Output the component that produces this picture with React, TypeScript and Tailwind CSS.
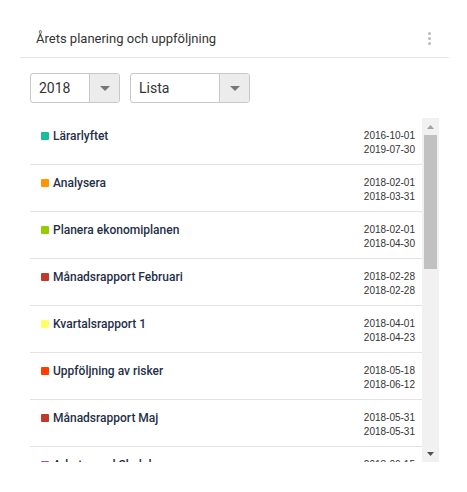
import { useState } from "react";

type Activity = {
	id: number;
	title: string;
	color: string;
	start: string;
	end: string;
};

const activities: Activity[] = [
	{ id: 1, title: "Lärarlyftet", color: "#1abc9c", start: "2016-10-01", end: "2019-07-30" },
	{ id: 2, title: "Analysera", color: "#ff9500", start: "2018-02-01", end: "2018-03-31" },
	{ id: 3, title: "Planera ekonomiplanen", color: "#99cc00", start: "2018-02-01", end: "2018-04-30" },
	{ id: 4, title: "Månadsrapport Februari", color: "#c0392b", start: "2018-02-28", end: "2018-02-28" },
	{ id: 5, title: "Kvartalsrapport 1", color: "#ffff66", start: "2018-04-01", end: "2018-04-23" },
	{ id: 6, title: "Uppföljning av risker", color: "#ff3d00", start: "2018-05-18", end: "2018-06-12" },
	{ id: 7, title: "Månadsrapport Maj", color: "#c0392b", start: "2018-05-31", end: "2018-05-31" },
	{ id: 8, title: "Arbete med Skolplan", color: "#c2458a", start: "2018-06-15", end: "2018-08-31" },
];

function Select({ value, width }: { value: string; width: string }) {
	return (
		<div
			className={`flex h-[30px] ${width} rounded-[3px] border border-[#c8c8c8] bg-white overflow-hidden`}
		>
			<div className="flex-1 flex items-center pl-[8px] text-[14px] text-[#333]">
				{value}
			</div>
			<div className="w-[30px] flex items-center justify-center bg-[#ececec] border-l border-[#c8c8c8]">
				<svg width="10" height="5" viewBox="0 0 10 5">
					<path d="M0 0 L10 0 L5 5 Z" fill="#777" />
				</svg>
			</div>
		</div>
	);
}

export default function App() {
	const [year] = useState("2018");
	const [view] = useState("Lista");

	return (
		<div
			className="w-[467px] h-[492px] bg-white pt-[20px] pl-[20px]"
			style={{ fontFamily: "Roboto, 'Liberation Sans', sans-serif" }}
		>
			<div className="w-[429px] h-[449px] bg-white">
				<div className="h-[38px] flex items-center justify-between pl-[16px] pr-[18px] border-b border-[#e5e5e5]">
					<h2 className="text-[13px] text-[#333] leading-none">
						Årets planering och uppföljning
					</h2>
					<div className="flex flex-col gap-[2px]">
						<span className="w-[3px] h-[3px] bg-[#bbb] rounded-full" />
						<span className="w-[3px] h-[3px] bg-[#bbb] rounded-full" />
						<span className="w-[3px] h-[3px] bg-[#bbb] rounded-full" />
					</div>
				</div>

				<div className="px-[10px] pt-[15px]">
					<div className="flex gap-[10px]">
						<Select value={year} width="w-[90px]" />
						<Select value={view} width="w-[120px]" />
					</div>

					<div className="flex mt-[15px] h-[344px]">
						<div className="flex-1 overflow-hidden">
							{activities.map((a) => (
								<div
									key={a.id}
									className="h-[47px] border-b border-[#e3e3e3] flex justify-between items-start pl-[11px] pr-[7px] pt-[10px]"
								>
									<div className="flex items-center gap-[4px] pt-[1px]">
										<span
											className="w-[8px] h-[8px] rounded-[1px]"
											style={{ backgroundColor: a.color }}
										/>
										<span className="text-[12px] font-medium text-[#1f3048] leading-[14px]">
											{a.title}
										</span>
									</div>
									<div
										className="text-right text-[10px] leading-[14px] text-[#333] pt-[1px]"
										style={{ fontFamily: "'Liberation Sans', Arial, sans-serif" }}
									>
										<div>{a.start}</div>
										<div>{a.end}</div>
									</div>
								</div>
							))}
						</div>
						<div className="w-[17px] bg-[#f1f1f1] flex flex-col items-center">
							<div className="h-[17px] flex items-center justify-center">
								<svg width="7" height="4" viewBox="0 0 7 4">
									<path d="M0 4 L7 4 L3.5 0 Z" fill="#a3a3a3" />
								</svg>
							</div>
							<div className="w-[13px] h-[134px] bg-[#c1c1c1]" />
							<div className="flex-1" />
							<div className="h-[17px] flex items-center justify-center">
								<svg width="7" height="4" viewBox="0 0 7 4">
									<path d="M0 0 L7 0 L3.5 4 Z" fill="#505050" />
								</svg>
							</div>
						</div>
					</div>
				</div>
			</div>
		</div>
	);
}
